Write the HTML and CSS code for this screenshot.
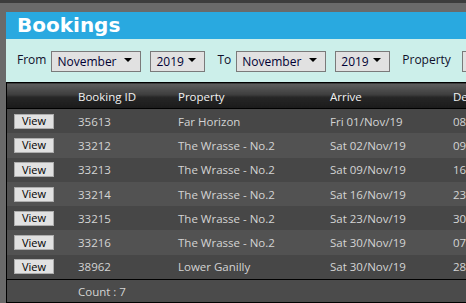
FILE: index.html
```html
<!DOCTYPE html>
<html lang="en">
<head>
    <meta charset="UTF-8">
    <meta name="viewport" content="width=device-width, initial-scale=1.0">
    <title>Bookings</title>
    <link rel="stylesheet" href="styles.css">
</head>
<body>
<div id="page">
    <header id="title-bar"><h1>Bookings</h1></header>

    <div id="filter-bar">
        <label class="filter-label">From</label>
        <span class="select month"><select><option>November</option></select></span>
        <span class="select year"><select><option>2019</option></select></span>
        <label class="filter-label">To</label>
        <span class="select month"><select><option>November</option></select></span>
        <span class="select year"><select><option>2019</option></select></span>
        <label class="filter-label wide">Property</label>
        <span class="select month"><select><option></option></select></span>
    </div>

    <table id="bookings">
        <thead>
            <tr>
                <th class="col-btn"></th>
                <th class="col-id">Booking ID</th>
                <th class="col-prop">Property</th>
                <th class="col-arrive">Arrive</th>
                <th class="col-depart">Depart</th>
            </tr>
        </thead>
        <tbody>
            <tr><td><button>View</button></td><td>35613</td><td>Far Horizon</td><td>Fri 01/Nov/19</td><td>08/Nov/19</td></tr>
            <tr><td><button>View</button></td><td>33212</td><td>The Wrasse - No.2</td><td>Sat 02/Nov/19</td><td>09/Nov/19</td></tr>
            <tr><td><button>View</button></td><td>33213</td><td>The Wrasse - No.2</td><td>Sat 09/Nov/19</td><td>16/Nov/19</td></tr>
            <tr><td><button>View</button></td><td>33214</td><td>The Wrasse - No.2</td><td>Sat 16/Nov/19</td><td>23/Nov/19</td></tr>
            <tr><td><button>View</button></td><td>33215</td><td>The Wrasse - No.2</td><td>Sat 23/Nov/19</td><td>30/Nov/19</td></tr>
            <tr><td><button>View</button></td><td>33216</td><td>The Wrasse - No.2</td><td>Sat 30/Nov/19</td><td>07/Dec/19</td></tr>
            <tr><td><button>View</button></td><td>38962</td><td>Lower Ganilly</td><td>Sat 30/Nov/19</td><td>28/Dec/19</td></tr>
        </tbody>
        <tfoot>
            <tr><td></td><td colspan="4">Count : 7</td></tr>
        </tfoot>
    </table>
</div>
</body>
</html>
```

FILE: styles.css
```css
html, body {
    overflow: hidden;
}

body {
    margin: 0;
    background-color: #6a6a6a;
    border-top: 3px solid #3c3c3c;
    font-family: "Open Sans", "Liberation Sans", sans-serif;
}

#page {
    width: 620px;
    margin: 9px 0 0 6px;
}

#title-bar {
    background-color: #29a9e0;
    height: 27px;
    padding-left: 11px;
}

#title-bar h1 {
    margin: 0;
    font-family: "DejaVu Sans", sans-serif;
    font-size: 20px;
    font-weight: bold;
    line-height: 27px;
    color: #fff;
}

#filter-bar {
    background-color: #ccefea;
    height: 43px;
    padding-left: 11px;
    display: flex;
    align-items: center;
}

.filter-label {
    font-size: 12px;
    color: #10102a;
    margin-right: 5px;
    margin-top: -3px;
}

.filter-label.wide {
    margin-right: 11px;
}

.select {
    position: relative;
}

.month {
    margin-right: 9px;
}

.year {
    margin-right: 12px;
}

.select select {
    appearance: none;
    -webkit-appearance: none;
    height: 21px;
    margin: 0;
    padding: 0 0 0 5px;
    border: 1px solid #7a7a7a;
    border-radius: 0;
    background-color: #e1e1e1;
    font-family: "Open Sans", sans-serif;
    font-size: 12px;
    color: #000033;
}

.month select {
    width: 90px;
}

.year select {
    width: 55px;
}

/* little arrow over the select box */
.select::after {
    content: "";
    position: absolute;
    right: 9px;
    top: 9px;
    border-left: 4px solid transparent;
    border-right: 4px solid transparent;
    border-top: 4px solid #000;
    pointer-events: none;
}

#bookings {
    width: 620px;
    border-collapse: collapse;
    border: 1px solid #000;
    font-size: 11.5px;
    color: #d4d4d4;
    table-layout: fixed;
}

#bookings th {
    height: 23px;
    padding: 2px 0 0 6px;
    text-align: left;
    font-weight: normal;
    color: #f2f2f2;
    background: linear-gradient(#5e5e5e, #3e3e3e 45%, #262626 55%, #1a1a1a);
    border-bottom: 1px solid #000;
}

#bookings td {
    height: 24.3px;
    padding: 0 0 0 6px;
    white-space: nowrap;
}

#bookings tbody tr:nth-child(odd) {
    background-color: #474747;
}

#bookings tbody tr:nth-child(even) {
    background-color: #525252;
}

#bookings tfoot td {
    background-color: #4b4b4b;
    border-top: 1px solid #000;
    height: 22px;
}

.col-btn { width: 59px; }
.col-id { width: 94px; }
.col-prop { width: 146px; }
.col-arrive { width: 117px; }

#bookings td:first-child {
    padding-left: 7px;
}

#bookings button {
    display: block;
    width: 40px;
    height: 15px;
    padding: 0;
    border: 1px solid #adadad;
    border-radius: 0;
    background-color: #e1e1e1;
    font-family: "Open Sans", sans-serif;
    font-size: 11px;
    line-height: 12px;
    color: #000;
}
```
